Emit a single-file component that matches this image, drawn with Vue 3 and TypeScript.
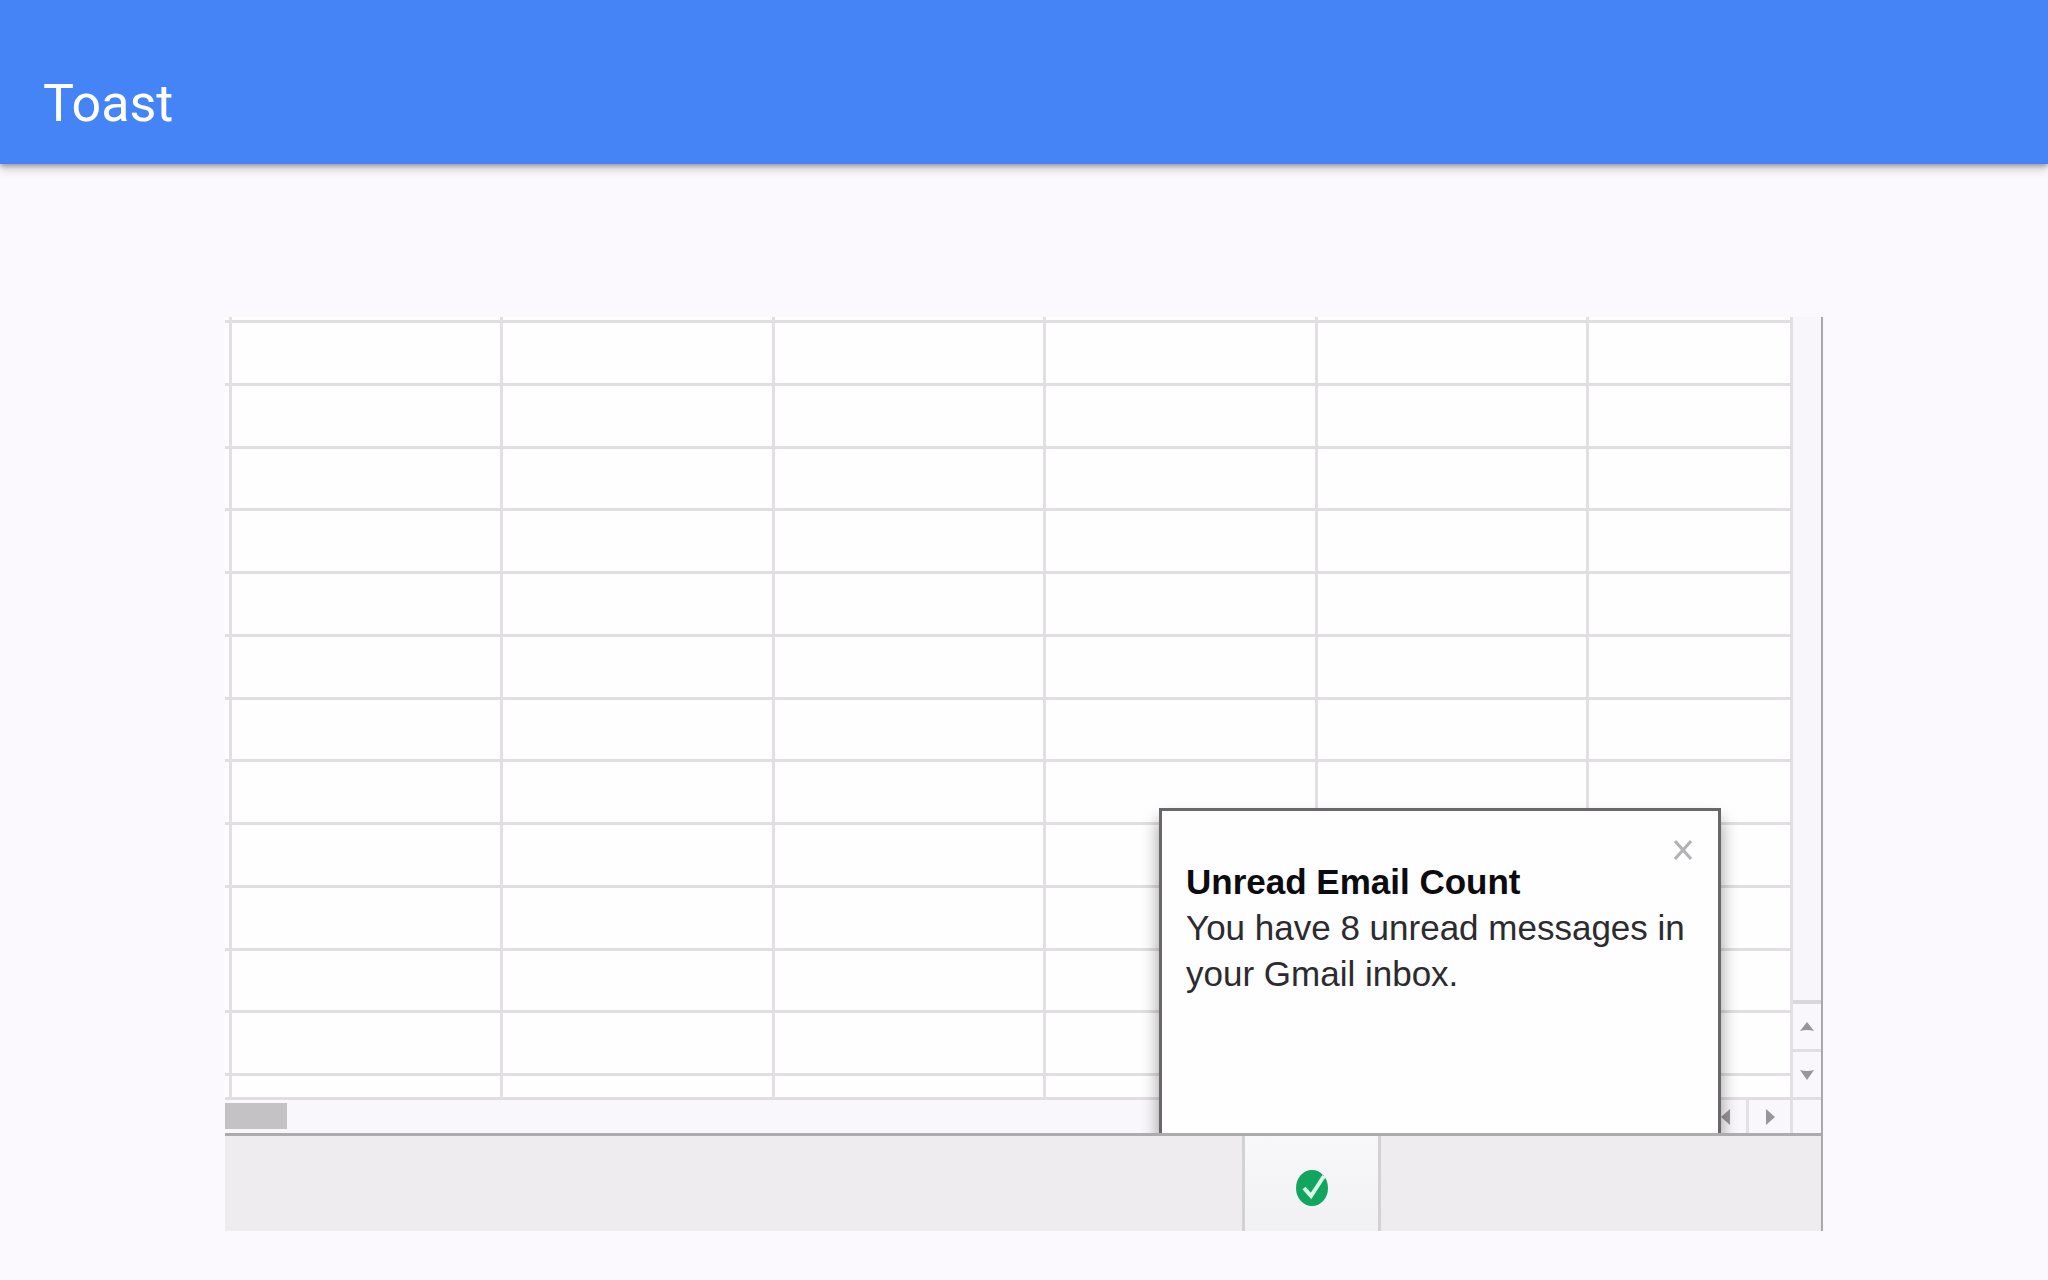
<script setup lang="ts">
import { ref } from 'vue'

const rows = 14
const columns = 7
const toastOpen = ref(true)
</script>

<template>
  <div class="page">
    <header class="app-bar">
      <h1>Toast</h1>
    </header>

    <main class="desktop">
      <section class="sheet">
        <div class="sheet-body">
          <table class="cells" aria-label="Spreadsheet">
            <tbody>
              <tr v-for="r in rows" :key="r">
                <td v-for="c in columns" :key="c"></td>
              </tr>
            </tbody>
          </table>
          <div class="v-scroll">
            <div class="v-track"></div>
            <button type="button" class="v-button" aria-label="Scroll up">
              <svg width="14" height="10" viewBox="0 0 14 10"><path d="M7 0 L14 9 Q7 7 0 9 Z" /></svg>
            </button>
            <button type="button" class="v-button" aria-label="Scroll down">
              <svg width="14" height="10" viewBox="0 0 14 10"><path d="M0 0 Q7 2 14 0 L7 10 Z" /></svg>
            </button>
          </div>
        </div>
        <div class="h-scroll">
          <div class="h-thumb"></div>
          <div class="h-track"></div>
          <button type="button" class="h-button" aria-label="Scroll left">
            <svg width="10" height="16" viewBox="0 0 10 16"><path d="M9 0 V16 L0 8 Z" /></svg>
          </button>
          <button type="button" class="h-button" aria-label="Scroll right">
            <svg width="10" height="16" viewBox="0 0 10 16"><path d="M1 0 V16 L10 8 Z" /></svg>
          </button>
          <div class="corner"></div>
        </div>

        <aside v-if="toastOpen" class="toast" role="status">
          <button type="button" class="close" aria-label="Close" @click="toastOpen = false">
            <svg width="18" height="20" viewBox="0 0 18 20"><path d="M1 1 L17 19 M17 1 L1 19" /></svg>
          </button>
          <h2>Unread Email Count</h2>
          <p>You have 8 unread messages in your Gmail inbox.</p>
        </aside>
      </section>

      <footer class="taskbar">
        <button type="button" class="task" aria-label="Notifier">
          <svg width="36" height="40" viewBox="0 0 36 40">
            <ellipse cx="18" cy="20" rx="16" ry="18" fill="#12a55f" />
            <path d="M10 20 L17 28 L30 8" fill="none" stroke="#d9fbe8" stroke-width="4" />
          </svg>
        </button>
      </footer>
    </main>
  </div>
</template>

<style>
body {
  margin: 0;
  background: #fbf9fd;
}
</style>

<style scoped>
.page {
  display: flex;
  flex-direction: column;
  font-family: "Liberation Sans", Arial, sans-serif;
}

.app-bar {
  padding: 72px 43px 28px;
  background: #4484f6;
  box-shadow: 0 2px 5px rgba(0, 0, 0, 0.34), 0 8px 8px rgba(0, 0, 0, 0.1);
}

h1 {
  margin: 0;
  font: 400 52px/64px Roboto, sans-serif;
  color: #fff;
}

button {
  display: flex;
  align-items: center;
  justify-content: center;
  box-sizing: border-box;
  margin: 0;
  padding: 0;
  border: 0;
  background: #f9f7fb;
}

.desktop {
  margin: 153px 225px 48px;
  border-right: 2px solid #a9a8ab;
}

.sheet {
  position: relative;
  overflow: hidden;
  border-bottom: 3px solid #adabae;
  background: #fefefe;
}

.sheet-body {
  display: flex;
  height: 783px;
}

.cells {
  flex: 1;
  height: 783px;
  table-layout: fixed;
  border-collapse: separate;
  border-spacing: 0;
}

.cells td {
  padding: 0;
  border-right: 3px solid #e3dfe4;
  border-bottom: 3px solid #e1dee2;
}

.cells td:first-child {
  width: 4px;
}

.cells td:last-child {
  width: 201px;
}

.cells tr:first-child td {
  height: 3px;
}

.cells tr:last-child td {
  height: 21px;
}

.v-scroll {
  display: flex;
  flex-direction: column;
  width: 28px;
}

.v-track {
  flex: 1;
  border-bottom: 4px solid #d9d7da;
  background: #f8f6fa;
}

.v-button {
  height: 48px;
  border-bottom: 3px solid #e1dee2;
}

.v-button path,
.h-button path {
  fill: #98969a;
}

.h-scroll {
  display: flex;
  height: 33px;
  background: #f9f7fb;
}

.h-thumb {
  width: 62px;
  margin: 3px 0 4px;
  background: #c4c2c5;
}

.h-track {
  flex: 1;
}

.h-button {
  width: 44px;
  border-right: 3px solid #e3dfe4;
}

.corner {
  width: 28px;
}

.toast {
  position: absolute;
  top: 491px;
  right: 100px;
  bottom: 0;
  box-sizing: border-box;
  width: 562px;
  padding: 48px 24px 0;
  border: 3px solid #69676a;
  border-bottom: 0;
  background: #fefdff;
  box-shadow: 0 12px 16px rgba(0, 0, 0, 0.4);
  font-size: 35px;
  line-height: 46px;
  color: #2c2b2e;
}

.toast h2 {
  margin: 0;
  font-size: 35px;
  color: #0c0b0e;
}

.toast p {
  margin: 0;
}

.close {
  position: absolute;
  top: 24px;
  right: 20px;
  width: 30px;
  height: 30px;
  background: transparent;
}

.close path {
  fill: none;
  stroke: #b3b1b5;
  stroke-width: 3;
}

.taskbar {
  display: flex;
  justify-content: flex-end;
  height: 95px;
  padding-right: 440px;
  background: #eeecef;
}

.task {
  width: 139px;
  padding-top: 8px;
  border: solid #d3d1d4;
  border-width: 0 3px;
  background: linear-gradient(#f8f7fa, #f1f0f2);
}
</style>
